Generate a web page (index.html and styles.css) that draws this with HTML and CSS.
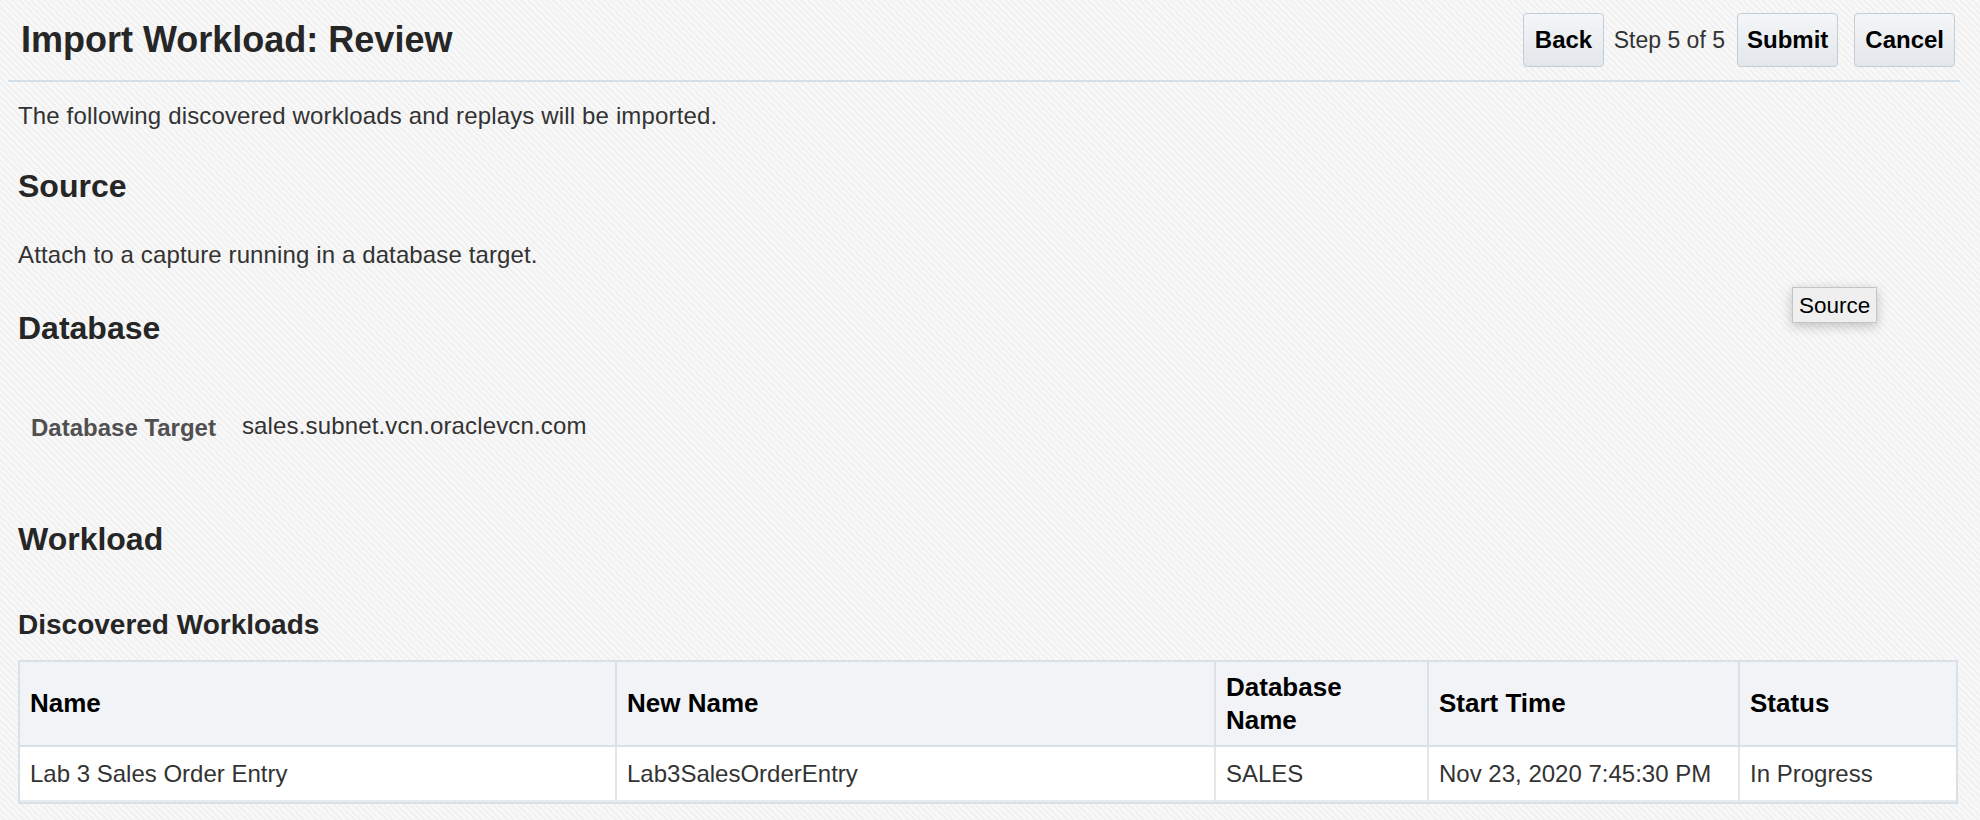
FILE: index.html
```html
<!DOCTYPE html>
<html lang="en">
<head>
<meta charset="utf-8">
<title>Import Workload: Review</title>
<link rel="stylesheet" href="styles.css">
</head>
<body>
<div class="page">
  <header class="page-header">
    <h1 class="page-title">Import Workload: Review</h1>
    <div class="train-actions">
      <button class="btn btn-back">Back</button>
      <span class="step">Step 5 of 5</span>
      <button class="btn">Submit</button>
      <button class="btn btn-cancel">Cancel</button>
    </div>
  </header>

  <main class="content">
    <p class="intro">The following discovered workloads and replays will be imported.</p>

    <h2 class="heading">Source</h2>
    <p class="desc">Attach to a capture running in a database target.</p>

    <h2 class="heading heading-db">Database</h2>
    <div class="field-list">
      <div class="field-row">
        <span class="field-label">Database Target</span>
        <span class="field-value">sales.subnet.vcn.oraclevcn.com</span>
      </div>
    </div>

    <h2 class="heading heading-workload">Workload</h2>
    <h3 class="subheading">Discovered Workloads</h3>

    <table class="grid">
      <colgroup>
        <col class="c-name">
        <col class="c-new">
        <col class="c-db">
        <col class="c-start">
        <col class="c-status">
      </colgroup>
      <thead>
        <tr>
          <th>Name</th>
          <th>New Name</th>
          <th>Database Name</th>
          <th>Start Time</th>
          <th>Status</th>
        </tr>
      </thead>
      <tbody>
        <tr>
          <td>Lab 3 Sales Order Entry</td>
          <td>Lab3SalesOrderEntry</td>
          <td>SALES</td>
          <td>Nov 23, 2020 7:45:30 PM</td>
          <td>In Progress</td>
        </tr>
      </tbody>
    </table>
  </main>
</div>

<div class="tooltip">Source</div>
</body>
</html>
```

FILE: styles.css
```css
* { box-sizing: border-box; }

html, body {
  margin: 0;
  padding: 0;
}

body {
  width: 1980px;
  height: 820px;
  overflow: hidden;
  font-family: "Liberation Sans", Arial, sans-serif;
  color: #333333;
  background-color: #f5f5f5;
  background-image: repeating-linear-gradient(45deg, #f8f8f8 0px, #f8f8f8 2.5px, #f1f1f1 2.5px, #f1f1f1 4.5px);
}

.page {
  margin: 0 20px 0 8px;
}

.page-header {
  display: flex;
  align-items: center;
  justify-content: space-between;
  padding: 13px 5px 13px 13px;
  border-bottom: 2px solid #d5dfe7;
}

.page-title {
  margin: 0;
  font-size: 36px;
  line-height: 42px;
  font-weight: bold;
  color: #262626;
}

.train-actions {
  display: flex;
  align-items: center;
}

.btn {
  height: 54px;
  padding: 0 9px;
  font-family: "Liberation Sans", Arial, sans-serif;
  font-size: 24px;
  font-weight: bold;
  color: #000;
  background: linear-gradient(#f4f6f8, #e3e7eb);
  border: 1px solid #c3cdd6;
  border-radius: 4px;
}

.btn-back {
  padding: 0 10.5px;
}

.step {
  margin: 0 12px 0 10px;
  font-size: 23px;
  color: #333;
}

.btn-cancel {
  margin-left: 16px;
  padding: 0 10px;
}

.content {
  padding: 0 2px 0 10px;
}

.intro {
  margin: 20px 0 0;
  font-size: 24px;
  line-height: 28px;
  letter-spacing: 0.15px;
}

.heading {
  margin: 38px 0 0;
  font-size: 32px;
  line-height: 36px;
  font-weight: bold;
  color: #262626;
}

.heading-db { margin-top: 41px; }
.heading-workload { margin-top: 79px; }

.desc {
  margin: 37px 0 0;
  font-size: 24px;
  line-height: 28px;
  letter-spacing: 0.12px;
}

.field-list {
  padding: 68px 0 0 13px;
}

.field-row {
  display: flex;
  align-items: baseline;
  gap: 26px;
  font-size: 24px;
  line-height: 28px;
}

.field-label {
  font-weight: bold;
  color: #505050;
}

.field-value {
  color: #333;
  letter-spacing: 0.15px;
  position: relative;
  top: -2px;
}

.subheading {
  margin: 52px 0 0;
  font-size: 28px;
  line-height: 32px;
  font-weight: bold;
  color: #262626;
}

.grid {
  margin-top: 19px;
  width: 1940px;
  table-layout: fixed;
  border-collapse: separate;
  border-spacing: 0;
  border: 2px solid #d9e1e8;
}

.c-name { width: 597px; }
.c-new { width: 599px; }
.c-db { width: 213px; }
.c-start { width: 311px; }
.c-status { width: 216px; }

.grid th {
  height: 85px;
  padding: 0 10px;
  text-align: left;
  vertical-align: middle;
  font-size: 26px;
  line-height: 33px;
  font-weight: bold;
  color: #000;
  background: #f1f3f6;
  border-right: 2px solid #d9e1e8;
  border-bottom: 2px solid #d9e1e8;
}

.grid td {
  height: 55px;
  padding: 0 10px;
  font-size: 24px;
  color: #333;
  background: #ffffff;
  border-right: 2px solid #e1e7ec;
  border-bottom: 2px solid #e9ecef;
  vertical-align: middle;
}

.grid th:last-child,
.grid td:last-child {
  border-right: none;
}

.tooltip {
  position: absolute;
  left: 1792px;
  top: 287px;
  height: 36px;
  padding: 1px 6px 0 6px;
  font-size: 22.5px;
  line-height: 33px;
  color: #000;
  background: #efefef;
  border: 1px solid #c4c4c4;
  box-shadow: 0 3px 12px rgba(0, 0, 0, 0.22);
}
```
